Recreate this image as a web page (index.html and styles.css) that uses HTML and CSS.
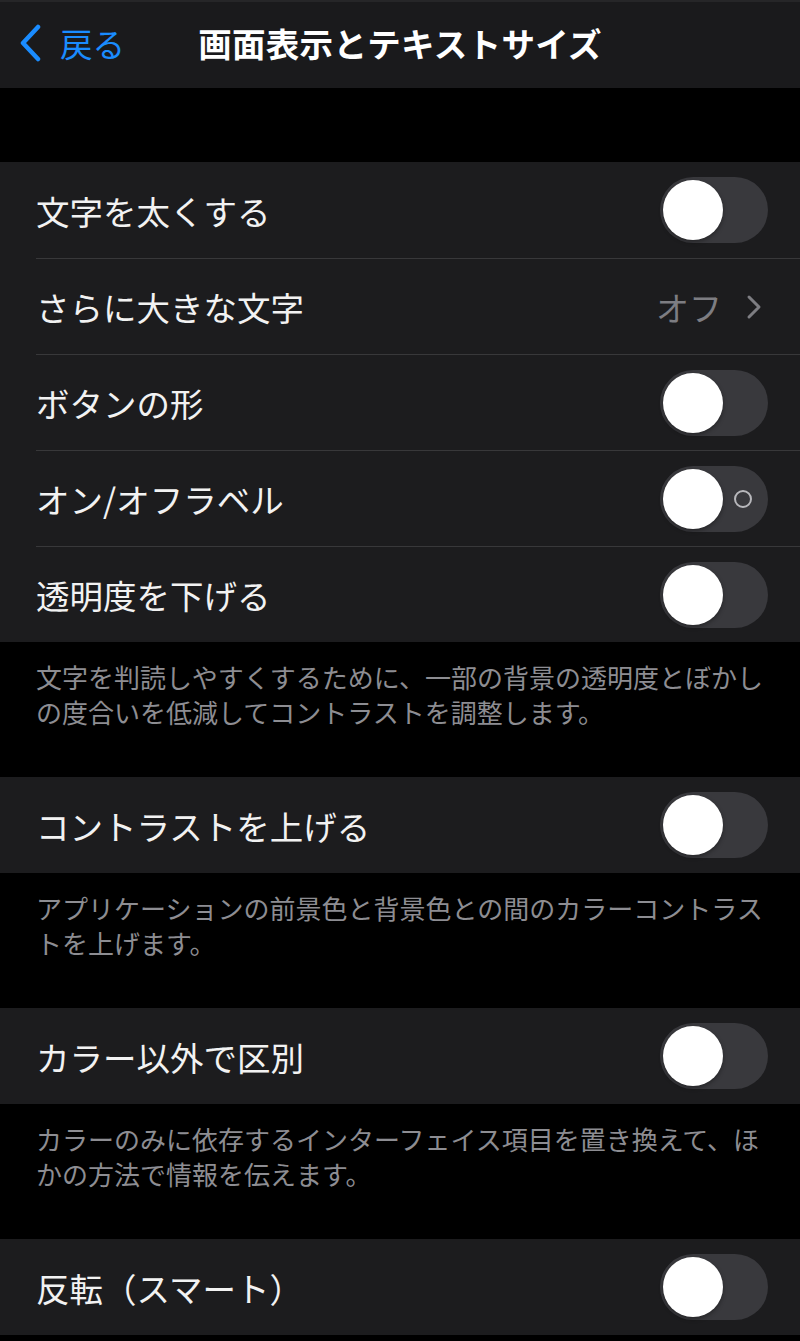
FILE: index.html
```html
<!DOCTYPE html>
<html lang="ja"><head>
<meta charset="UTF-8">
<meta name="viewport" content="width=device-width, initial-scale=1.0">
<title>画面表示とテキストサイズ</title>
<link rel="stylesheet" href="styles.css">
</head>
<body>
  <header class="navbar">
    <a class="back" href="#">
      <svg class="back-chevron" width="24" height="38" viewBox="0 0 24 38"><path d="M20 3 L5 19 L20 35" fill="none" stroke="#1a8cff" stroke-width="4.5" stroke-linecap="round" stroke-linejoin="round"/></svg>
      <span>戻る</span>
    </a>
    <h1>画面表示とテキストサイズ</h1>
  </header>

  <div class="spacer"></div>

  <ul class="group">
    <li class="row"><span class="label">文字を太くする</span><span class="switch"><span class="knob"></span></span></li>
    <li class="row"><span class="label">さらに大きな文字</span><span class="detail">オフ<svg width="16" height="26" viewBox="0 0 16 26"><path d="M3 3 L13 13 L3 23" fill="none" stroke="#7d7d82" stroke-width="3" stroke-linecap="round" stroke-linejoin="round"/></svg></span></li>
    <li class="row"><span class="label">ボタンの形</span><span class="switch"><span class="knob"></span></span></li>
    <li class="row"><span class="label">オン/オフラベル</span><span class="switch"><span class="knob"></span><span class="ring"></span></span></li>
    <li class="row"><span class="label">透明度を下げる</span><span class="switch"><span class="knob"></span></span></li>
  </ul>
  <p class="footer">文字を判読しやすくするために、一部の背景の透明度とぼかしの度合いを低減してコントラストを調整します。</p>

  <ul class="group">
    <li class="row"><span class="label">コントラストを上げる</span><span class="switch"><span class="knob"></span></span></li>
  </ul>
  <p class="footer">アプリケーションの前景色と背景色との間のカラーコントラストを上げます。</p>

  <ul class="group">
    <li class="row"><span class="label">カラー以外で区別</span><span class="switch"><span class="knob"></span></span></li>
  </ul>
  <p class="footer">カラーのみに依存するインターフェイス項目を置き換えて、ほかの方法で情報を伝えます。</p>

  <ul class="group">
    <li class="row"><span class="label">反転（スマート）</span><span class="switch"><span class="knob"></span></span></li>
  </ul>
</body></html>
```

FILE: styles.css
```css
body {
  margin: 0;
  background-color: #000;
  color: #fff;
  font-family: "Noto Sans CJK JP", "Noto Sans", sans-serif;
  width: 800px;
  overflow: hidden;
}
.navbar {
  height: 88px;
  background-color: #1a1a1c;
  border-top: 2px solid #262628;
  box-sizing: border-box;
  position: relative;
  display: flex;
  align-items: center;
  justify-content: center;
  padding-bottom: 6px;
}
.navbar h1 {
  margin: 0;
  font-size: 33.5px;
  font-weight: 700;
  letter-spacing: 0.3px;
}
.back {
  position: absolute;
  left: 18px;
  top: 17px;
  display: flex;
  align-items: center;
  gap: 18px;
  color: #1a8cff;
  text-decoration: none;
  font-size: 32.5px;
}
.spacer {
  height: 74px;
}
.group {
  list-style: none;
  margin: 0;
  padding: 0;
  background-color: #1c1c1e;
}
.row {
  height: 96px;
  margin-left: 36px;
  padding-right: 32px;
  display: flex;
  align-items: center;
  justify-content: space-between;
  border-top: 1px solid #38383a;
  box-sizing: border-box;
}
.row:first-child {
  border-top: none;
}
.label {
  font-size: 33.5px;
  color: #f2f2f2;
}
.switch {
  position: relative;
  width: 108px;
  height: 66px;
  border-radius: 33px;
  background-color: #39393d;
}
.knob {
  position: absolute;
  left: 3px;
  top: 3px;
  width: 60px;
  height: 60px;
  border-radius: 50%;
  background-color: #fff;
  box-shadow: 0 2px 4px rgba(0,0,0,0.35);
}
.ring {
  position: absolute;
  right: 16px;
  top: 24px;
  width: 18px;
  height: 18px;
  border: 2.5px solid #b8b8bc;
  border-radius: 50%;
  box-sizing: border-box;
}
.detail {
  display: flex;
  align-items: center;
  gap: 24px;
  font-size: 33px;
  color: #7d7d82;
  margin-right: 6px;
}
.footer {
  margin: 0;
  padding: 17px 30px 48px 36px;
  font-size: 26px;
  line-height: 35px;
  color: #8d8d92;
}
```
